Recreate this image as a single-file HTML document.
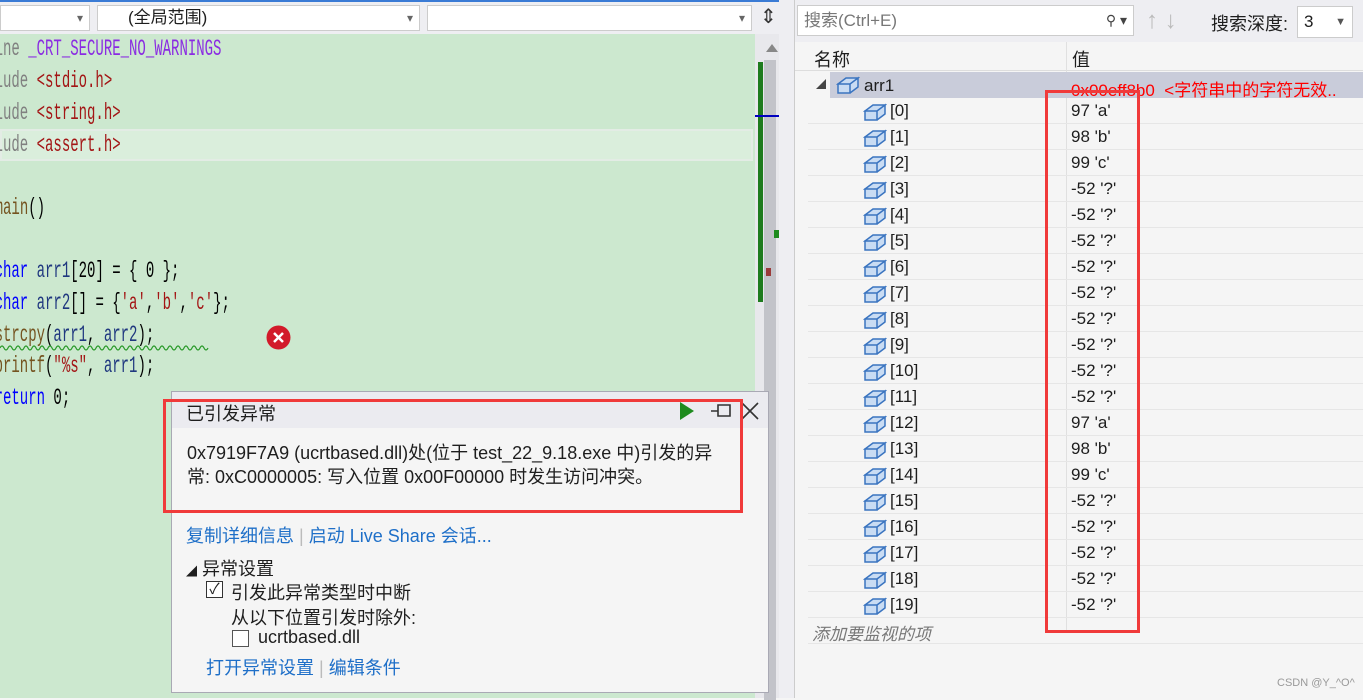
<!DOCTYPE html>
<html><head><meta charset="utf-8"><style>
*{margin:0;padding:0;box-sizing:border-box}
body{width:1363px;height:698px;overflow:hidden;position:relative;background:#f5f5f5;font-family:"Liberation Sans","Noto Sans CJK SC",sans-serif;font-size:17px;color:#1e1e1e}
.a{position:absolute}
.code{position:absolute;left:0;top:34px;width:755px;height:664px;background:#cce8cf;overflow:hidden}
.ln{position:absolute;left:-39px;font-family:"Liberation Mono","Noto Sans CJK SC",monospace;font-size:14px;white-space:pre;transform:scaleY(1.65);transform-origin:0 50%;height:20px;line-height:20px}
.pp{color:#808080}.mac{color:#8a2be2}.str{color:#a31515}.kw{color:#0000ff}.id{color:#1f377f}.fn{color:#74531f}.tx{color:#000}
.dd{position:absolute;top:5px;height:26px;background:#fff;border:1px solid #ccc;font-size:17px;line-height:24px}
.dd:after{content:"▾";position:absolute;right:6px;top:0;color:#666;font-size:12px}
.row{position:absolute;left:808px;width:555px;height:26px;border-bottom:1px solid #e6e6e6;font-size:17px;line-height:26px}
.row .n{position:absolute;left:82px}
.row .v{position:absolute;left:263px}
.ic{position:absolute;left:55px;top:4px}
.pp2{font-size:18px}
</style></head><body>
<div class="a" style="left:0;top:0;width:790px;height:34px;background:#eeeef2;border-top:2px solid #3a7bd5"></div>
<div class="dd" style="left:0;width:90px"></div>
<div class="dd" style="left:97px;width:323px;padding-left:30px">(全局范围)</div>
<div class="dd" style="left:427px;width:325px"></div>
<div class="a" style="left:760px;top:4px;font-size:20px;color:#333">⇕</div>
<div class="code">
<div class="a" style="left:0;top:95px;width:753px;height:32px;background:#daeedc;border:2px solid #e3ece5"></div>
<div class="ln" style="top:6px"><span class="pp">#define </span><span class="mac">_CRT_SECURE_NO_WARNINGS</span></div>
<div class="ln" style="top:38px"><span class="pp">#include </span><span class="str">&lt;stdio.h&gt;</span></div>
<div class="ln" style="top:70px"><span class="pp">#include </span><span class="str">&lt;string.h&gt;</span></div>
<div class="ln" style="top:102px"><span class="pp">#include </span><span class="str">&lt;assert.h&gt;</span></div>
<div class="ln" style="top:165px"><span class="kw">int </span><span class="fn">main</span><span class="tx">()</span></div>
<div class="ln" style="top:228px"><span class="kw">    char </span><span class="id">arr1</span><span class="tx">[20] = { 0 };</span></div>
<div class="ln" style="top:260px"><span class="kw">    char </span><span class="id">arr2</span><span class="tx">[] = {</span><span class="str">'a'</span><span class="tx">,</span><span class="str">'b'</span><span class="tx">,</span><span class="str">'c'</span><span class="tx">};</span></div>
<div class="ln" style="top:292px"><span class="fn">    strcpy</span><span class="tx">(</span><span class="id">arr1</span><span class="tx">, </span><span class="id">arr2</span><span class="tx">);</span></div>
<div class="ln" style="top:323px"><span class="fn">    printf</span><span class="tx">(</span><span class="str">"%s"</span><span class="tx">, </span><span class="id">arr1</span><span class="tx">);</span></div>
<div class="ln" style="top:355px"><span class="kw">    return </span><span class="tx">0;</span></div>
<svg class="a" style="left:0;top:310px" width="210" height="8"><path d="M0 4 Q2 0 4 4 T8 4 T12 4 T16 4 T20 4 T24 4 T28 4 T32 4 T36 4 T40 4 T44 4 T48 4 T52 4 T56 4 T60 4 T64 4 T68 4 T72 4 T76 4 T80 4 T84 4 T88 4 T92 4 T96 4 T100 4 T104 4 T108 4 T112 4 T116 4 T120 4 T124 4 T128 4 T132 4 T136 4 T140 4 T144 4 T148 4 T152 4 T156 4 T160 4 T164 4 T168 4 T172 4 T176 4 T180 4 T184 4 T188 4 T192 4 T196 4 T200 4 T204 4 T208 4" stroke="#2a9a2a" fill="none" stroke-width="1.2"/></svg>
<svg class="a" style="left:265px;top:290px" width="27" height="27"><circle cx="13.5" cy="13.5" r="12" fill="#d21a2a"/><path d="M9 9L18 18M18 9L9 18" stroke="#fff" stroke-width="2.5"/></svg>
</div>
<div class="a" style="left:755px;top:34px;width:24px;height:664px;background:#e8e8ec"></div>
<div class="a" style="left:766px;top:44px;width:0;height:0;border-left:6px solid transparent;border-right:6px solid transparent;border-bottom:8px solid #888"></div>
<div class="a" style="left:764px;top:60px;width:12px;height:640px;background:#c2c3c9"></div>
<div class="a" style="left:758px;top:62px;width:5px;height:240px;background:#1e7b1e"></div>
<div class="a" style="left:755px;top:115px;width:24px;height:2px;background:#0000c0"></div>
<div class="a" style="left:774px;top:230px;width:5px;height:8px;background:#1e8b1e"></div>
<div class="a" style="left:766px;top:268px;width:5px;height:8px;background:#9b3a3a"></div>
<div class="a" style="left:779px;top:0;width:16px;height:698px;background:#eeeef2;border-right:1px solid #ccc"></div>
<!-- popup -->
<div class="a" style="left:171px;top:391px;width:598px;height:302px;background:#f5f5f5;border:1px solid #a9a9b4"></div>
<div class="a" style="left:172px;top:392px;width:596px;height:36px;background:#ebebf0"></div>
<div class="a pp2" style="left:186px;top:400px">已引发异常</div>
<svg class="a" style="left:678px;top:400px" width="90" height="22"><path d="M2 2L16 11L2 20Z" fill="#1e8b1e"/><path d="M33 11H40M40 5H52V16H40Z" stroke="#333" stroke-width="1.6" fill="none"/><path d="M64 3L80 19M80 3L64 19" stroke="#333" stroke-width="1.6"/></svg>
<div class="a pp2" style="left:187px;top:441px;line-height:24px">0x7919F7A9 (ucrtbased.dll)处(位于 test_22_9.18.exe 中)引发的异<br>常: 0xC0000005: 写入位置 0x00F00000 时发生访问冲突。</div>
<div class="a" style="left:163px;top:399px;width:580px;height:114px;border:3px solid #f03a3a"></div>
<div class="a pp2" style="left:186px;top:522px;color:#1e6fc8">复制详细信息 <span style="color:#bbb">|</span> 启动 Live Share 会话...</div>
<div class="a pp2" style="left:186px;top:555px"><span style="font-size:11px">◢</span> 异常设置</div>
<div class="a" style="left:206px;top:581px;width:17px;height:17px;border:1px solid #333;background:#fff;font-size:15px;line-height:15px;text-align:center">✓</div>
<div class="a pp2" style="left:231px;top:579px">引发此异常类型时中断</div>
<div class="a pp2" style="left:231px;top:604px">从以下位置引发时除外:</div>
<div class="a" style="left:232px;top:630px;width:17px;height:17px;border:1px solid #555;background:#fff"></div>
<div class="a pp2" style="left:258px;top:627px">ucrtbased.dll</div>
<div class="a pp2" style="left:206px;top:654px;color:#1e6fc8">打开异常设置 <span style="color:#bbb">|</span> 编辑条件</div>
<!-- watch -->
<div class="a" style="left:795px;top:0;width:568px;height:42px;background:#eeeef2"></div>
<div class="a" style="left:797px;top:5px;width:337px;height:31px;background:#fff;border:1px solid #ccc;font-size:17px;line-height:29px;padding-left:6px;color:#777">搜索(Ctrl+E)<span style="position:absolute;right:6px;color:#444;font-size:14px">⚲ ▾</span></div>
<div class="a" style="left:1146px;top:7px;font-size:24px;color:#bbb">↑ ↓</div>
<div class="a" style="left:1211px;top:10px;font-size:18px">搜索深度:</div>
<div class="a" style="left:1297px;top:6px;width:56px;height:32px;background:#fff;border:1px solid #ccc;font-size:17px;line-height:30px;padding-left:6px">3<span style="position:absolute;right:6px;font-size:11px;color:#555">▼</span></div>
<div class="a" style="left:795px;top:42px;width:568px;height:29px;background:#f5f5f5;border-bottom:1px solid #ddd"></div>
<div class="a" style="left:1066px;top:42px;width:1px;height:590px;background:#e0e0e0"></div>
<div class="a" style="left:814px;top:46px;font-size:18px">名称</div>
<div class="a" style="left:1072px;top:46px;font-size:18px">值</div>
<div class="a" style="left:830px;top:72px;width:533px;height:26px;background:#c9ccda"></div>
<div class="a" style="left:816px;top:76px;font-size:10px;color:#444">◢</div>
<svg class="a" style="left:836px;top:75px" width="24" height="20"><path d="M2 9L10 3H22L14 9Z M2 9H14V18H2Z M14 9L22 3V12L14 18" fill="#c9dcf3" stroke="#3a74c0" stroke-width="1.5"/></svg>
<div class="a" style="left:864px;top:76px;font-size:17px">arr1</div>
<div class="a" style="left:1071px;top:76px;font-size:17px;color:#f00;white-space:nowrap">0x00eff8b0 &nbsp;&lt;字符串中的字符无效..</div>
<div id="rows"></div>
<div class="a" style="left:812px;top:620px;font-size:17px;font-style:italic;color:#777">添加要监视的项</div>
<div class="a" style="left:808px;top:643px;width:555px;height:1px;background:#e6e6e6"></div>
<div class="a" style="left:1045px;top:90px;width:95px;height:543px;border:3px solid #f03a3a"></div>
<div class="a" style="left:1277px;top:677px;font-size:11px;color:#999">CSDN @Y_^O^</div>
<script>
var v=["97 'a'","98 'b'","99 'c'"],h="";
for(var i=0;i<20;i++){var val=(i<3)?v[i]:(i>=12&&i<15?v[i-12]:"-52 '?'");
h+='<div class="row" style="top:'+(98+i*26)+'px"><svg class="ic" width="24" height="20"><path d="M2 9L10 3H22L14 9Z M2 9H14V18H2Z M14 9L22 3V12L14 18" fill="#c9dcf3" stroke="#3a74c0" stroke-width="1.5"/></svg><span class="n">['+i+']</span><span class="v">'+val+'</span></div>';}
document.getElementById("rows").innerHTML=h;
</script>
</body></html>
